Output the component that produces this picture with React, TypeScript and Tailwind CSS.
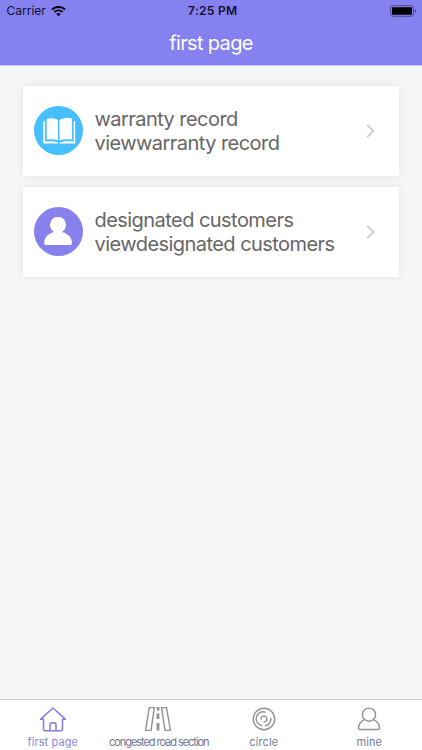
import type { ReactNode } from 'react';

function StatusBar() {
  return (
    <div className="grid h-[22px] grid-cols-3 items-center pr-[5px] pl-[6.5px] text-[12px] text-[#11102a]">
      <div className="flex items-center gap-[5px]">
        <span>Carrier</span>
        <svg className="h-[11px] w-[15px]" viewBox="0 0 15 11" fill="none">
          <path d="M.9 3.6a9.4 9.4 0 0 1 13.2 0" stroke="#080812" strokeWidth="2" />
          <path d="M3.3 6.1a6 6 0 0 1 8.4 0" stroke="#080812" strokeWidth="1.9" />
          <path d="M5.2 8a3.3 3.3 0 0 1 4.6 0L7.5 10.3Z" fill="#080812" />
        </svg>
      </div>
      <span className="pl-[2px] text-center font-semibold tracking-[0.3px]">7:25 PM</span>
      <svg className="h-[12px] w-[27px] justify-self-end" viewBox="0 0 27 12">
        <rect x=".5" y=".7" width="23" height="10.6" rx="2.4" fill="none" stroke="#4b4886" />
        <rect x="2" y="2.2" width="20" height="7.6" rx="1" fill="#000" />
        <path d="M25 4.2c1.6.6 1.6 3 0 3.6Z" fill="#4b4886" />
      </svg>
    </div>
  );
}

function BookIcon() {
  return (
    <svg className="size-[49px] shrink-0" viewBox="0 0 49 49">
      <circle cx="24.5" cy="24.5" r="24.5" fill="#47bffd" />
      <g fill="#fff">
        <path d="M12.7 13c3-1.3 8.4-1.2 11.2 1v20.4c-3-1.4-7.600-1.500-11.200-.8Z" />
        <path d="M25.500 14c3-2.200 9.200-2.300 12.400-1.500v21.100c-3.900-.7-9.400-.6-12.400.8Z" />
        <path d="M9.300 15h1.600v20.500c4.200-.5 10-.3 13 .9v1.200H9.300Z" />
        <path d="M41.200 15h-1.600v20.500c-4-.5-11-.3-14.100.9v1.200h15.700Z" />
      </g>
    </svg>
  );
}

function CustomerIcon() {
  return (
    <svg className="size-[49px] shrink-0" viewBox="0 0 49 49">
      <circle cx="24.5" cy="24.5" r="24.5" fill="#8781ee" />
      <path
        d="M24 10a7.8 7.8 0 0 0-4.6 14.2v1C14.4 26.400 10.200 30.500 10.200 35.700c0 1.500.7 2.300 2.200 2.300h23.400c1.500 0 2.200-.8 2.200-2.300 0-5.200-4.400-9.300-9.400-10.500v-1A7.800 7.800 0 0 0 24 10Z"
        fill="#fff"
      />
    </svg>
  );
}

interface MenuCardProps {
  icon: ReactNode;
  title: string;
  description: string;
}

function MenuCard({ icon, title, description }: MenuCardProps) {
  return (
    <button className="flex h-[90px] w-full items-center bg-white pr-[24px] pb-px pl-[11px] text-left shadow-[0_0_8px_rgba(0,0,0,0.07)]">
      {icon}
      <div className="mt-px ml-[11.5px] flex-1 text-[20px] leading-[24px] tracking-[-0.55px] whitespace-nowrap text-[#666]">
        <p>{title}</p>
        <p>{description}</p>
      </div>
      <svg className="h-[14px] w-[9px]" viewBox="0 0 9 14" fill="none">
        <path d="m1.2 1 6 6-6 6" stroke="#c4c4c4" strokeWidth="1.7" />
      </svg>
    </button>
  );
}

function HomeIcon() {
  return (
    <svg className="size-[28px]" viewBox="0 0 28 28" fill="none" stroke="#8781dc" strokeWidth="1.6" strokeLinejoin="round" strokeLinecap="round">
      <path d="M4.5 14.2v10.1c0 1 .6 1.500 1.500 1.500h16c.9 0 1.500-.5 1.500-1.500V14.200h2.800L14 3 1.700 14.200Z" />
      <path d="M11 25.8v-6c0-1.300.6-1.900 1.900-1.900h2.200c1.300 0 1.900.6 1.900 1.900v6" />
    </svg>
  );
}

function RoadIcon() {
  return (
    <svg className="size-[28px]" viewBox="0 0 28 28" fill="none" stroke="#929292" strokeWidth="1.4">
      <path d="M5.3 2.6h5L7 25.4H1.5ZM17.5 2.6h5l4 22.8H21Z" />
      <path d="M14 2v3.500M14 8.500V14M14 18v7.500" strokeWidth="2.8" />
    </svg>
  );
}

function CircleIcon() {
  return (
    <svg className="size-[28px]" viewBox="0 0 28 28" fill="none" stroke="#929292" strokeWidth="1.4" strokeLinecap="round">
      <circle cx="14" cy="14" r="10.7" />
      <path d="M15.2 7.100a7 7 0 1 0-3.200 13.600M20.900 13.200a7 7 0 0 1-5.400 7.600" />
      <path d="M11 14.3a3 3 0 1 1 3 2.700" />
    </svg>
  );
}

function MineIcon() {
  return (
    <svg className="size-[28px]" viewBox="0 0 28 28" fill="none" stroke="#929292" strokeWidth="1.4" strokeLinejoin="round">
      <circle cx="14" cy="9.7" r="6.6" />
      <path d="M9.6 14.7c-3.400 1.400-5.700 4.400-6.100 8-.1 1.200.4 1.800 1.500 1.800h18c1.100 0 1.600-.6 1.500-1.800-.4-3.600-2.700-6.600-6.100-8" />
    </svg>
  );
}

const tabs = [
  { label: 'first page', icon: <HomeIcon />, style: 'tracking-[0.1px] text-[#8b84e2]' },
  { label: 'congested road section', icon: <RoadIcon />, style: 'pl-px tracking-[-1.05px] text-[#717795]' },
  { label: 'circle', icon: <CircleIcon />, style: 'tracking-[0.1px] text-[#737a99]' },
  { label: 'mine', icon: <MineIcon />, style: 'tracking-[0.1px] text-[#737a99]' },
];

export default function App() {
  return (
    <div className="flex h-screen flex-col overflow-hidden bg-[#f5f5f5] font-[Inter,sans-serif]">
      <header className="h-[66px] border-b border-[#c9c7f2] bg-[#8681f0]">
        <StatusBar />
        <h1 className="text-center text-[20px] leading-[43px] tracking-[-0.65px] text-white">first page</h1>
      </header>

      <main className="flex flex-1 flex-col gap-[11px] px-[23px] pt-[20px]">
        <MenuCard icon={<BookIcon />} title="warranty record" description="viewwarranty record" />
        <MenuCard icon={<CustomerIcon />} title="designated customers" description="viewdesignated customers" />
      </main>

      <nav className="grid h-[51px] grid-cols-4 border-t border-[#d3d3d3] bg-white">
        {tabs.map((tab) => (
          <button key={tab.label} className="flex flex-col items-center pt-[5px]">
            {tab.icon}
            <span className={`mt-px text-[11px] leading-[16px] whitespace-nowrap ${tab.style}`}>{tab.label}</span>
          </button>
        ))}
      </nav>
    </div>
  );
}
